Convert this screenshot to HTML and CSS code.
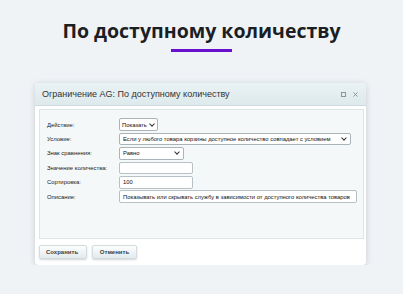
FILE: index.html
```html
<!DOCTYPE html>
<html lang="ru">
<head>
	<meta charset="UTF-8" />
	<title>По доступному количеству</title>
	<link rel="stylesheet" href="styles.css">
</head>
<body>

<div class="header">
	<h1 class="header-title">По доступному количеству</h1>
	<div class="header-line"></div>
</div>

<div class="dialog">
	<div class="dialog-head">
		<span class="dialog-title">Ограничение AG: По доступному количеству</span>
		<span class="dialog-icons">
			<svg width="5" height="5" viewBox="0 0 5 5"><rect x="0.5" y="0.5" width="4" height="4" fill="none" stroke="#8a9599" stroke-width="1"/></svg>
			<svg width="5" height="5" viewBox="0 0 5 5"><path d="M0.5 0.5L4.5 4.5M4.5 0.5L0.5 4.5" stroke="#8a9599" stroke-width="1"/></svg>
		</span>
	</div>

	<div class="panel">
		<div class="row">
			<label class="lbl">Действие:</label>
			<div class="field sel w-small">Показать<span class="arr"></span></div>
		</div>
		<div class="row">
			<label class="lbl">Условие:</label>
			<div class="field sel w-wide">Если у любого товара корзины доступное количество совпадает с условием<span class="arr"></span></div>
		</div>
		<div class="row">
			<label class="lbl">Знак сравнения:</label>
			<div class="field sel w-mid">Равно<span class="arr"></span></div>
		</div>
		<div class="row">
			<label class="lbl">Значение количества:</label>
			<div class="field inp w-inp"></div>
		</div>
		<div class="row">
			<label class="lbl">Сортировка:</label>
			<div class="field inp w-inp">100</div>
		</div>
		<div class="row">
			<label class="lbl">Описание:</label>
			<div class="field inp w-full">Показывать или скрывать службу в зависимости от доступного количества товаров</div>
		</div>
	</div>

	<div class="buttons">
		<div class="btn">Сохранить</div>
		<div class="btn">Отменить</div>
	</div>
</div>

</body>
</html>
```

FILE: styles.css
```css
body {
	margin: 0;
	background: #f0f3f6;
	font-family: "Liberation Sans", Arial, sans-serif;
	color: #222;
}

.header {
	padding-top: 17px;
	display: flex;
	flex-direction: column;
	align-items: center;
}
.header-title {
	margin: 0;
	font-family: "Open Sans", sans-serif;
	font-weight: 700;
	font-size: 19.5px;
	line-height: 28px;
	color: #1b1e22;
}
.header-line {
	width: 61px;
	height: 3px;
	background: #6b0fcf;
	margin-top: 4px;
}

.dialog {
	margin: 31px 0 0 35px;
	width: 331px;
	background: #fff;
	border-radius: 4px;
	box-shadow: 0 1px 6px rgba(120, 135, 150, 0.35);
	padding-bottom: 6px;
}
.dialog-head {
	height: 22px;
	display: flex;
	align-items: center;
	justify-content: space-between;
	padding: 0 8px 0 7px;
	background: linear-gradient(#eaf3f4, #dde9eb);
	border-radius: 4px 4px 0 0;
	border-bottom: 1px solid #cfdcdf;
}
.dialog-title {
	font-size: 9px;
	color: #333;
}
.dialog-icons {
	display: flex;
	gap: 7px;
}
.dialog-icons svg {
	display: block;
}

.panel {
	margin: 3px 2px 0 4px;
	background: #f4f8f9;
	border: 1px solid #dce6e8;
	padding: 8px 0 35px 7px;
	display: flex;
	flex-direction: column;
	gap: 1px;
}
.row {
	display: flex;
	align-items: center;
	height: 13.4px;
}
.lbl {
	width: 72px;
	font-size: 5.9px;
	color: #222;
}
.field {
	box-sizing: border-box;
	height: 12.5px;
	background: #fff;
	border: 1px solid #aab4b8;
	border-radius: 2px;
	font-size: 5.85px;
	color: #111;
	display: flex;
	align-items: center;
	padding-left: 3px;
	white-space: nowrap;
	overflow: hidden;
}
.inp {
	border-color: #b7c0c4;
}
.sel {
	justify-content: space-between;
	gap: 3px;
	padding-right: 4px;
}
.arr {
	flex: none;
	width: 3px;
	height: 3px;
	border-right: 1px solid #333;
	border-bottom: 1px solid #333;
	transform: rotate(45deg);
	margin-top: -2px;
}
.w-small { width: 39px; padding-left: 2px; }
.w-wide { width: 232px; }
.w-mid { width: 65px; }
.w-inp { width: 74px; }
.w-full { width: 238px; }

.buttons {
	display: flex;
	gap: 5px;
	padding: 6px 0 0 4px;
}
.btn {
	height: 14px;
	box-sizing: border-box;
	padding: 0 6px;
	display: flex;
	align-items: center;
	font-size: 6px;
	font-weight: 700;
	color: #3a4246;
	background: linear-gradient(#fdfefe, #e3eaec);
	border: 1px solid #d3dcdf;
	border-radius: 2px;
	box-shadow: 0 1px 2px rgba(100, 115, 125, 0.3);
}
.btn:first-child { width: 48px; }
.btn:last-child { width: 45px; justify-content: center; }
```
